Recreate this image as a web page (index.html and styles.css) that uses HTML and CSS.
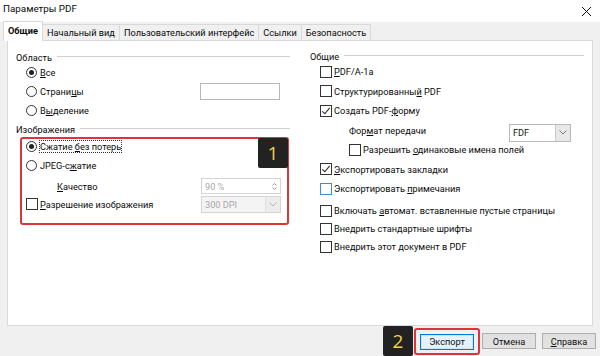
FILE: index.html
```html
<!DOCTYPE html>
<html lang="ru">
<head>
  <meta charset="UTF-8" />
  <title>Параметры PDF</title>
  <link rel="stylesheet" href="styles.css">
</head>
<body>
  <div class="window">

    <!-- TITLE BAR -->
    <div class="titlebar">
      <span class="title">Параметры PDF</span>
      <svg class="close" width="11" height="11" viewBox="0 0 11 11">
        <path d="M1 1L10 10M10 1L1 10" stroke="#111" stroke-width="1" fill="none"/>
      </svg>
    </div>

    <!-- TABS -->
    <div class="tabs">
      <div class="tab active">Общие</div>
      <div class="tab">Начальный вид</div>
      <div class="tab">Пользовательский интерфейс</div>
      <div class="tab">Ссылки</div>
      <div class="tab">Безопасность</div>
    </div>

    <!-- TAB PAGE -->
    <div class="page">

      <!-- LEFT COLUMN -->
      <div class="col left">
        <div class="legend">Область</div>
        <div class="row"><span class="radio on"></span><span><u>В</u>се</span></div>
        <div class="row"><span class="radio"></span><span>Страни<u>ц</u>ы</span><span class="field"></span></div>
        <div class="row"><span class="radio"></span><span>В<u>ы</u>деление</span></div>

        <div class="legend images">Изображения</div>
        <div class="mark">
          <div class="row r1"><span class="radio on"></span><span class="focus">Сжатие <u>б</u>ез потерь</span></div>
          <div class="row r2"><span class="radio"></span><span>JPEG-с<u>ж</u>атие</span></div>
          <div class="row r3">
            <span class="sub"><u>К</u>ачество</span>
            <span class="field spin disabled">90 %
              <span class="spin-btn">
                <svg width="5" height="9" viewBox="0 0 5 9"><path d="M0.5 3.5L2.5 1.5L4.5 3.5M0.5 5.5L2.5 7.5L4.5 5.5" stroke="#9a9a9a" fill="none"/></svg>
              </span>
            </span>
          </div>
          <div class="row r4">
            <span class="check"></span><span><u>Р</u>азрешение изображения</span>
            <span class="field combo disabled">300 DPI
              <span class="drop grey">
                <svg width="8" height="5" viewBox="0 0 8 5"><path d="M0.5 0.5L4 4L7.5 0.5" stroke="#b5b5b5" fill="none"/></svg>
              </span>
            </span>
          </div>
          <div class="badge b1">1</div>
        </div>
      </div>

      <!-- RIGHT COLUMN -->
      <div class="col right">
        <div class="legend">Общие</div>
        <div class="row"><span class="check"></span><span><u>P</u>DF/A-1a</span></div>
        <div class="row"><span class="check"></span><span>Структурированны<u>й</u> PDF</span></div>
        <div class="row"><span class="check on"></span><span>Создать PDF-<u>ф</u>орму</span></div>
        <div class="row indent">
          <span>Фор<u>м</u>ат передачи</span>
          <span class="field combo fdf">FDF
            <span class="drop">
              <svg width="8" height="5" viewBox="0 0 8 5"><path d="M0.5 0.5L4 4L7.5 0.5" stroke="#777" fill="none"/></svg>
            </span>
          </span>
        </div>
        <div class="row indent"><span class="check"></span><span>Разрешить <u>о</u>динаковые имена полей</span></div>
        <div class="row"><span class="check on"></span><span><u>Э</u>кспортировать закладки</span></div>
        <div class="row"><span class="check hover"></span><span>Экспортировать <u>п</u>римечания</span></div>
        <div class="row tight gap"><span class="check"></span><span>Включать <u>а</u>втомат. вставленные пустые страницы</span></div>
        <div class="row tight"><span class="check"></span><span>Внедрить стандартные шрифты</span></div>
        <div class="row tight"><span class="check"></span><span>Внедрить этот документ в PDF</span></div>
      </div>
    </div>

    <!-- BUTTONS -->
    <div class="footer">
      <div class="badge b2">2</div>
      <div class="mark-btn"><button class="btn default">Экспорт</button></div>
      <button class="btn">Отмена</button>
      <button class="btn help"><u>С</u>правка</button>
    </div>
  </div>
</body>
</html>
```

FILE: styles.css
```css
body {
  margin: 0;
  font-family: Roboto, "Noto Sans", sans-serif;
  font-size: 9.2px;
  color: #0a0a0a;
}

u {
  text-decoration: underline;
  text-underline-offset: 1px;
}

.window {
  width: 600px;
  height: 356px;
  display: flex;
  flex-direction: column;
  background: #f0f0f0;
  overflow: hidden;
}

/* TITLE BAR */
.titlebar {
  height: 22px;
  flex: none;
  background: #fff;
  display: flex;
  align-items: flex-start;
  justify-content: space-between;
  padding: 2px 8px 0 3px;
  box-sizing: border-box;
}

.title {
  font-size: 9.8px;
  line-height: 13px;
}

.close {
  margin-top: 4px;
}

/* TABS */
.tabs {
  height: 18px;
  flex: none;
  display: flex;
  align-items: flex-end;
  padding-left: 3px;
  position: relative;
  z-index: 1;
}

.tab {
  height: 16px;
  line-height: 15px;
  padding: 0 4px;
  border: 1px solid #d9d9d9;
  border-bottom: none;
  margin-left: -1px;
  background: #f0f0f0;
  box-sizing: border-box;
  white-space: nowrap;
}

.tab.active {
  height: 20px;
  margin-bottom: -1px;
  background: #fff;
  font-weight: 700;
  margin-left: 0;
  padding: 1px 4px 0;
}

/* TAB PAGE */
.page {
  flex: 1;
  margin: 0 7px;
  background: #fff;
  border: 1px solid #d9d9d9;
  display: flex;
}

.col {
  display: flex;
  flex-direction: column;
}

.col.left {
  flex: none;
  width: 292px;
  padding-right: 10px;
  box-sizing: border-box;
}

.col.right {
  flex: 1;
  min-width: 0;
  padding-right: 8px;
}

.legend {
  display: flex;
  align-items: center;
  height: 16px;
  margin-top: 8px;
  margin-bottom: -2px;
  padding-left: 8px;
}

.legend::after {
  content: "";
  flex: 1;
  height: 0;
  border-top: 1px solid #cfcfcf;
  border-bottom: 1px solid #fdfdfd;
  margin-left: 5px;
}

.legend.images {
  height: 14px;
  margin-top: 2px;
  margin-bottom: 1px;
}

.col.right .legend {
  height: 14px;
  padding-left: 10px;
  margin-bottom: -1px;
}

.row {
  display: flex;
  align-items: center;
  height: 19px;
  padding-left: 18px;
  white-space: nowrap;
}

.col.left > .row {
  padding-right: 10px;
}

.col.right .row {
  height: 19.5px;
  padding-left: 20px;
}

.col.right .row.indent {
  padding-left: 49px;
}

.col.right .row.tight {
  height: 18px;
}

.col.right .row.gap {
  margin-top: 3px;
}

/* RADIO / CHECK */
.radio {
  width: 11px;
  height: 11px;
  border: 1px solid #333;
  border-radius: 50%;
  box-sizing: border-box;
  margin-right: 3px;
  display: flex;
  align-items: center;
  justify-content: center;
  flex: none;
}

.radio.on::after {
  content: "";
  width: 5px;
  height: 5px;
  border-radius: 50%;
  background: #222;
}

.check {
  width: 12px;
  height: 12px;
  border: 1px solid #333;
  box-sizing: border-box;
  margin-right: 2px;
  flex: none;
  position: relative;
}

.check.on::after {
  content: "";
  position: absolute;
  left: 3px;
  top: 0px;
  width: 3px;
  height: 7px;
  border: solid #222;
  border-width: 0 1px 1px 0;
  transform: rotate(40deg);
}

.check.hover {
  border-color: #3c8dd6;
}

.focus {
  outline: 1px dotted #333;
  outline-offset: 0;
}

.sub {
  padding-left: 31px;
}

/* FIELDS */
.field {
  margin-left: auto;
  width: 80px;
  height: 17px;
  border: 1px solid #b8b8b8;
  box-sizing: border-box;
  background: #fff;
  display: flex;
  align-items: center;
  padding-left: 3px;
  position: relative;
}

.field.disabled {
  color: #a8a8a8;
  border-color: #d4d4d4;
}

.field.spin {
  height: 16px;
}

.spin-btn {
  position: absolute;
  right: 0;
  top: 0;
  bottom: 0;
  width: 12px;
  display: flex;
  align-items: center;
  justify-content: center;
}

.field.combo.disabled {
  background: #f4f4f4;
}

.drop {
  position: absolute;
  right: 0;
  top: 0;
  bottom: 0;
  width: 14px;
  display: flex;
  align-items: center;
  justify-content: center;
  background: #e8e8e8;
  border-left: 1px solid #c8c8c8;
}

.drop.grey {
  background: #ececec;
  border-left-color: #e0e0e0;
}

.field.fdf {
  width: 62px;
  height: 18px;
  color: #111;
  margin-top: 5px;
  margin-right: 13px;
}

/* ANNOTATIONS */
.mark {
  position: relative;
  margin: 0 1px 0 12px;
  border: 2px solid #d9353b;
  border-radius: 3px;
  padding: 0 6px 11px 4px;
}

.mark .row {
  padding-left: 0;
}

.mark .row.r1 { height: 15px; }
.mark .row.r2 { height: 22px; }
.mark .row.r3 { height: 20px; }
.mark .row.r4 { height: 16px; }

.badge {
  background: #222;
  color: #f1cf4f;
  font-family: "Open Sans", sans-serif;
  font-size: 19px;
  display: flex;
  align-items: center;
  justify-content: center;
  border-radius: 2px;
}

.badge.b1 {
  position: absolute;
  right: -1px;
  top: -1px;
  width: 30px;
  height: 30px;
}

/* FOOTER */
.footer {
  height: 30px;
  flex: none;
  display: flex;
  align-items: center;
  justify-content: flex-end;
  padding-right: 4px;
}

.badge.b2 {
  width: 30px;
  align-self: stretch;
  margin-right: 1px;
}

.mark-btn {
  border: 2px solid #d9353b;
  border-radius: 3px;
  padding: 4px 4px 3px;
  margin-right: 2px;
}

.btn {
  font: inherit;
  color: #111;
  height: 16px;
  padding: 0;
  width: 54px;
  background: #e1e1e1;
  border: 1px solid #adadad;
  line-height: 13px;
}

.btn.default {
  background: #e5f1fb;
  border: 1px solid #0078d7;
  box-shadow: inset 0 0 0 1px #cde4f7;
}

.btn.help {
  margin-left: 6px;
}
```
